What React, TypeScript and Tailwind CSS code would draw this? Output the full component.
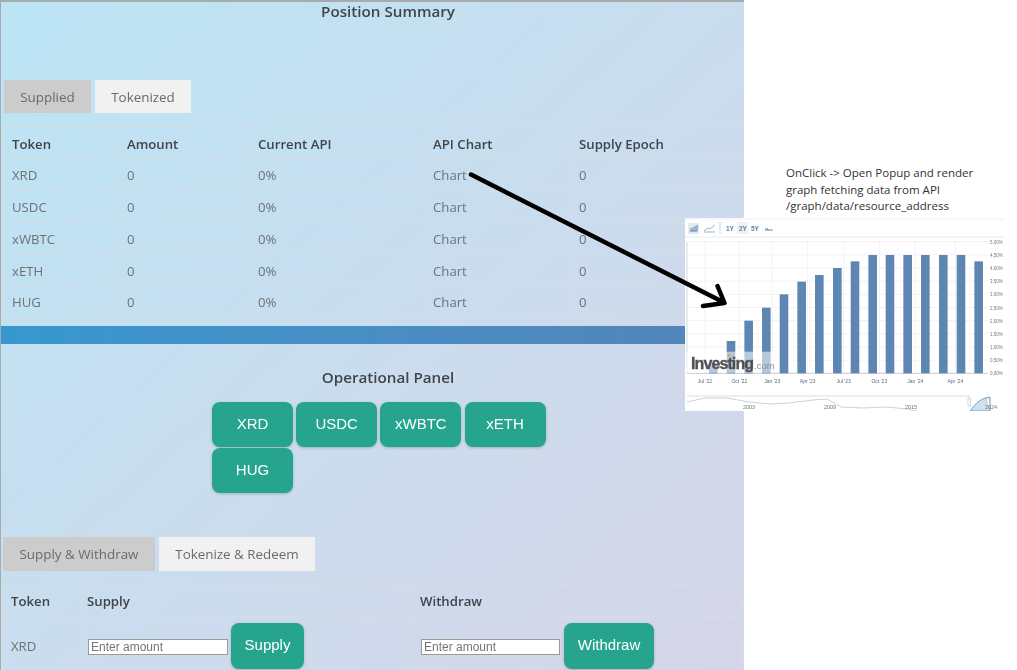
const font = { fontFamily: '"Open Sans", "Noto Sans", sans-serif' };

const rows = ["XRD", "USDC", "xWBTC", "xETH", "HUG"];
const bars: [number, number][] = [
  [100, 610], [153, 543], [206, 482], [259, 443], [312, 403], [365, 365], [418, 345], [472, 324],
  [525, 304], [578, 285], [630, 285], [683, 285], [736, 285], [790, 285], [843, 285], [896, 304],
];
const yLabels = ["5,00%", "4,50%", "4,00%", "3,50%", "3,00%", "2,50%", "2,00%", "1,50%", "1,00%", "0,50%", "0,00%"];
const xLabels: [number, string][] = [[75, "Jul '22"], [178, "Oct '22"], [277, "Jan '23"], [383, "Apr '23"], [491, "Jul '23"], [598, "Oct '23"], [706, "Jan '24"], [826, "Apr '24"]];

function Chart() {
  const X = (z: number) => z / 3 - 5;
  const Y = (z: number) => z / 3 - 58;
  return (
    <svg width="320" height="193" viewBox="0 0 320 193" className="block blur-[0.5px]">
      <rect width="320" height="193" fill="#fff" />
      <line x1="0" y1="1" x2="320" y2="1" stroke="#eef0f2" />
      <line x1="0" y1="19" x2="320" y2="19" stroke="#e8eaee" />
      <rect x="3" y="5" width="11" height="11" rx="1" fill="#e6e9ed" />
      <path d="M5 13h7M6 13v-3M8 13v-4M10 13v-5M12 13v-6" stroke="#5b83ad" strokeWidth="1" />
      <path d="M19 13l4-3 2 1 5-4M19 14h11" stroke="#9fb3c6" strokeWidth="1" fill="none" />
      <line x1="35" y1="4" x2="35" y2="16" stroke="#cfd4da" />
      <rect x="52" y="4" width="11" height="12" fill="#eef0f3" />
      <text x="41" y="13" fontSize="6.5" fontWeight="700" fill="#5b83ad" fontFamily="Liberation Sans">1Y</text>
      <text x="54" y="13" fontSize="6.5" fontWeight="700" fill="#5b83ad" fontFamily="Liberation Sans">2Y</text>
      <text x="66" y="13" fontSize="6.5" fontWeight="700" fill="#5b83ad" fontFamily="Liberation Sans">5Y</text>
      <text x="80" y="12.5" fontSize="4" fontWeight="700" fill="#5b83ad" fontFamily="Liberation Sans">Max</text>
      {yLabels.map((l, i) => (
        <g key={l}>
          <line x1="2" x2="303" y1={Y(245 + i * 39.5)} y2={Y(245 + i * 39.5)} stroke="#f1f2f4" />
          <text x="305" y={Y(245 + i * 39.5) + 2} fontSize="4.5" fill="#777" fontFamily="Liberation Sans">{l}</text>
        </g>
      ))}
      {xLabels.map(([x]) => (
        <line key={x} x1={X(x)} x2={X(x)} y1="24" y2={Y(640)} stroke="#f1f2f4" />
      ))}
      <line x1="2" y1="24" x2="2" y2={Y(640)} stroke="#d5d9de" />
      <line x1="2" y1={Y(640)} x2="303" y2={Y(640)} stroke="#c9ced5" />
      {bars.map(([x, t]) => (
        <rect key={x} x={X(x) - 4.3} y={Y(t)} width="8.6" height={Y(640) - Y(t)} fill="#5d86b2" />
      ))}
      <rect x="0" y={Y(575)} width="88" height={Y(640) - Y(575) - 0.5} fill="#fff" opacity="0.55" />
      {xLabels.map(([x, l]) => (
        <text key={l} x={X(x)} y="165" fontSize="5" textAnchor="middle" fill="#5b6b7c" fontFamily="Liberation Sans">{l}</text>
      ))}
      <text x="6" y="151" fontSize="16" fontWeight="700" letterSpacing="-0.9" fill="#4f5054" stroke="#4f5054" strokeWidth="0.3" fontFamily="Liberation Sans">Investing</text>
      <rect x="43" y="136" width="2.5" height="2.5" fill="#e8a33d" />
      <text x="69" y="151" fontSize="9.5" fill="#8a8d92" fontFamily="Liberation Sans">.com</text>
      <line x1="2" y1="178" x2="285" y2="178" stroke="#d9dde2" />
      <path d="M2 184l18-4 22-0 22 4 22 2 18-1 24-3 14-1 14 8 22 1 24-1 20 2 18 4" stroke="#c5d3e2" fill="none" />
      <path d="M285 193c6-8 11-13 20-14v14z" fill="#cfe0ef" stroke="#6f9cc7" />
      <rect x="283" y="180" width="2.5" height="8" fill="#fff" stroke="#aaa" strokeWidth="0.5" />
      <rect x="302" y="180" width="2.5" height="8" fill="#fff" stroke="#aaa" strokeWidth="0.5" />
      {[[64, "2003"], [145, "2009"], [226, "2015"], [306, "2024"]].map(([x, l]) => (
        <text key={l as string} x={x as number} y="191" fontSize="5.5" textAnchor="middle" fill="#777" fontFamily="Liberation Sans">{l}</text>
      ))}
    </svg>
  );
}

function Tab({ label, active, className }: { label: string; active?: boolean; className: string }) {
  return (
    <div className={`flex items-center justify-center pt-px text-[13.4px] text-[#666b6f] ${active ? "bg-[#cccccc]" : "bg-[#f1f1f1]"} ${className}`}>
      {label}
    </div>
  );
}

function Heading({ children, className }: { children: string; className: string }) {
  return <h2 className={`pl-[31px] text-center text-[15.2px] font-semibold text-[#3f4549] ${className}`}>{children}</h2>;
}

function Action({ label, className }: { label: string; className: string }) {
  return (
    <button className={`flex items-center justify-center rounded-lg bg-[#26a48e] text-[15px] text-white shadow-[0_1px_3px_rgba(0,0,0,0.2)] ${className}`} style={{ fontFamily: '"Liberation Sans", sans-serif' }}>
      {label}
    </button>
  );
}

const th = "border border-[#d3dee6] pl-[7px] pr-2 pt-[2px] text-left text-[13.2px] font-semibold text-[#3f4549]";
const td = "border border-[#d3dee6] pl-[7px] pr-2 text-[13.2px] font-normal text-[#6b7378]";
const first = "!pl-2";
const lowerFirst = "!pl-[9px]";

export default function App() {
  return (
    <div className="relative h-[670px] w-[1017px] overflow-hidden bg-white" style={font}>
      <main className="h-[670px] w-[744px] overflow-hidden border-t-2 border-l border-[#a5abae] bg-gradient-to-br from-[#bbe5f5] to-[#d6d5e8] blur-[0.3px]">
        <Heading className="-mt-px h-5 leading-5">Position Summary</Heading>
        <div className="ml-[3px] mt-[59px] flex gap-1">
          <Tab label="Supplied" active className="h-[33px] w-[87px]" />
          <Tab label="Tokenized" className="h-[33px] w-[96px]" />
        </div>
        <table className="ml-[2px] mt-[14px] w-[742px] table-fixed border-collapse">
          <colgroup>
            <col className="w-[116px]" />
            <col className="w-[131px]" />
            <col className="w-[175px]" />
            <col className="w-[146px]" />
            <col />
          </colgroup>
          <thead>
            <tr className="h-[32px]">
              <th className={`${th} ${first}`}>Token</th>
              <th className={th}>Amount</th>
              <th className={th}>Current API</th>
              <th className={th}>API Chart</th>
              <th className={th}>Supply Epoch</th>
            </tr>
          </thead>
          <tbody>
            {rows.map((r) => (
              <tr key={r} className="h-[32px] last:h-[31px]">
                <td className={`${td} ${first}`}>{r}</td>
                <td className={td}>0</td>
                <td className={td}>0%</td>
                <td className={td}>Chart</td>
                <td className={td}>0</td>
              </tr>
            ))}
          </tbody>
        </table>
        <div className="mt-[7px] h-[18px] bg-gradient-to-r from-[#3698cf] to-[#5484b9]" />
        <Heading className="mt-[23px] h-5 leading-5">Operational Panel</Heading>
        <div className="ml-[211px] mt-[15px] grid w-[340px] grid-cols-[81px_81px_81px_81px] gap-x-[3.2px] gap-y-[1px]">
          {rows.map((r) => (
            <Action key={r} label={r} className="h-[45px] w-[81px]" />
          ))}
        </div>
        <div className="ml-[2px] mt-[44px] flex gap-1">
          <Tab label="Supply & Withdraw" active className="h-[34px] w-[152px]" />
          <Tab label="Tokenize & Redeem" className="h-[34px] w-[156px]" />
        </div>
        <table className="mt-[13px] ml-0 w-[742px] table-fixed border-collapse">
          <colgroup>
            <col className="w-[80px]" />
            <col className="w-[333px]" />
            <col />
          </colgroup>
          <thead>
            <tr className="h-[32px]">
              <th className={`${th} ${lowerFirst}`}>Token</th>
              <th className={`${th} !pl-[5px]`}>Supply</th>
              <th className={`${th} !pl-[5px]`}>Withdraw</th>
            </tr>
          </thead>
          <tbody>
            <tr className="h-[58px]">
              <td className={`${td} ${lowerFirst} pt-[3px]`}>XRD</td>
              <td className="border border-[#d3dee6] pl-[6px]">
                <div className="flex items-center gap-[3px]">
                  <input readOnly placeholder="Enter amount" className="mt-[2px] h-[16px] w-[140px] border border-[#9a9a9a] bg-white px-[2px] text-xs placeholder:text-[#757575]" style={{ fontFamily: '"Liberation Sans", sans-serif' }} />
                  <Action label="Supply" className="h-[46px] w-[73px]" />
                </div>
              </td>
              <td className="border border-[#d3dee6] pl-[6px]">
                <div className="flex items-center gap-[4px]">
                  <input readOnly placeholder="Enter amount" className="mt-[2px] h-[16px] w-[139px] border border-[#9a9a9a] bg-white px-[2px] text-xs placeholder:text-[#757575]" style={{ fontFamily: '"Liberation Sans", sans-serif' }} />
                  <Action label="Withdraw" className="h-[46px] w-[90px]" />
                </div>
              </td>
            </tr>
          </tbody>
        </table>
      </main>

      <p className="absolute left-[786px] top-[165px] w-[215px] text-[11.5px] leading-[16.5px] text-[#333333]">
        OnClick -&gt; Open Popup and render graph fetching data from API /graph/data/resource_address
      </p>
      <div className="absolute left-[685px] top-[218px]">
        <Chart />
      </div>
      <svg className="absolute left-0 top-0" width="1017" height="670" viewBox="0 0 1017 670" fill="none">
        <path d="M471 174.5L724 302.5M717.5 286L724.5 303L703 306" stroke="#000" strokeWidth="4.5" strokeLinecap="round" strokeLinejoin="round" />
      </svg>
    </div>
  );
}
